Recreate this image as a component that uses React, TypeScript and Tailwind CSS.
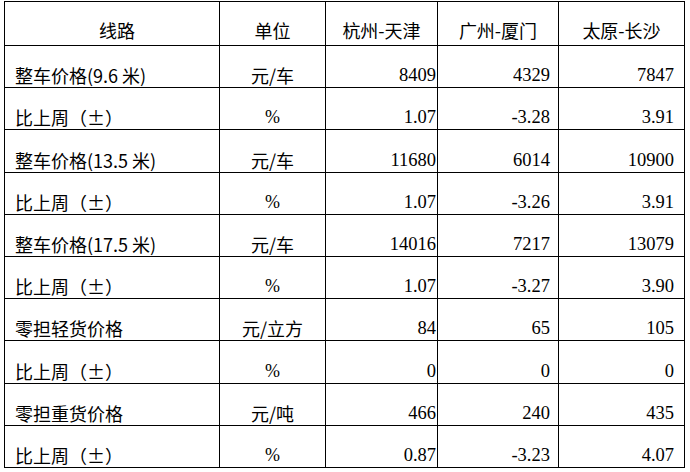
const rows: [string, string, string, string, string][] = [
  ['整车价格(9.6 米)', '元/车', '8409', '4329', '7847'],
  ['比上周（±）', '%', '1.07', '-3.28', '3.91'],
  ['整车价格(13.5 米)', '元/车', '11680', '6014', '10900'],
  ['比上周（±）', '%', '1.07', '-3.26', '3.91'],
  ['整车价格(17.5 米)', '元/车', '14016', '7217', '13079'],
  ['比上周（±）', '%', '1.07', '-3.27', '3.90'],
  ['零担轻货价格', '元/立方', '84', '65', '105'],
  ['比上周（±）', '%', '0', '0', '0'],
  ['零担重货价格', '元/吨', '466', '240', '435'],
  ['比上周（±）', '%', '0.87', '-3.23', '4.07'],
];

const cjk = { fontFamily: '"Noto Sans CJK SC", "Liberation Sans", sans-serif' };
const serif = { fontFamily: '"Liberation Serif", "Noto Sans CJK SC", serif' };

export default function App() {
  return (
    <div className="w-[690px] h-[472px] bg-white pt-px pl-1">
      <table className="border-collapse table-fixed w-[680px] text-[18px] text-black">
        <colgroup>
          <col className="w-[215px]" />
          <col className="w-[106px]" />
          <col className="w-[112px]" />
          <col className="w-[121px]" />
          <col className="w-[126px]" />
        </colgroup>
        <thead>
          <tr className="h-[44px]" style={cjk}>
            <th className="border border-black font-normal align-bottom pb-[4px] leading-[22px] pl-[10px]">线路</th>
            <th className="border border-black font-normal align-bottom pb-[4px] leading-[22px]">单位</th>
            <th className="border border-black font-normal align-bottom pb-[4px] leading-[22px]">杭州-天津</th>
            <th className="border border-black font-normal align-bottom pb-[4px] leading-[22px]">广州-厦门</th>
            <th className="border border-black font-normal align-bottom pb-[4px] leading-[22px]">太原-长沙</th>
          </tr>
        </thead>
        <tbody>
          {rows.map((r, i) => (
            <tr key={i} className="h-[42.2px]">
              <td className="border border-black align-bottom pl-[10px] pb-[1px] leading-[22px] whitespace-nowrap" style={cjk}>
                {r[0]}
              </td>
              <td className="border border-black align-bottom text-center pb-[1px] leading-[22px]" style={r[1] === '%' ? serif : cjk}>
                {r[1]}
              </td>
              <td className="border border-black align-bottom text-right pr-[1px] pb-[1px] leading-[22px] text-[18.5px]" style={serif}>
                {r[2]}
              </td>
              <td className="border border-black align-bottom text-right pr-[8px] pb-[1px] leading-[22px] text-[18.5px]" style={serif}>
                {r[3]}
              </td>
              <td className="border border-black align-bottom text-right pr-[10px] pb-[1px] leading-[22px] text-[18.5px]" style={serif}>
                {r[4]}
              </td>
            </tr>
          ))}
        </tbody>
      </table>
    </div>
  );
}
